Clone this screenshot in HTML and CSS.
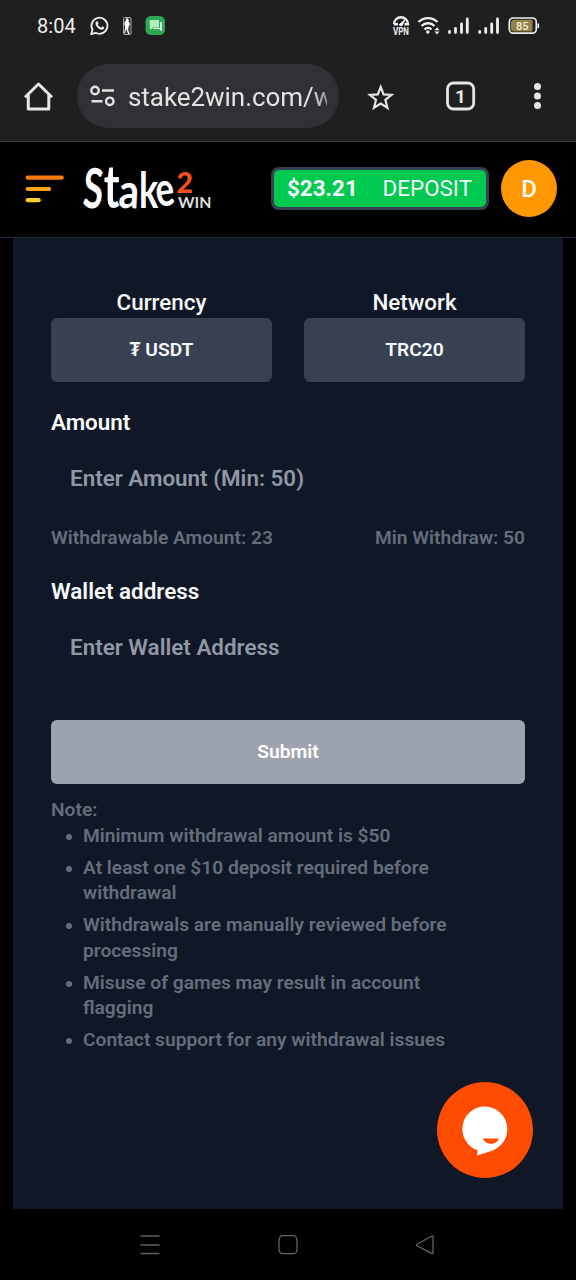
FILE: index.html
```html
<!DOCTYPE html>
<html lang="en">
<head>
<meta charset="utf-8">
<title>Stake2Win – Withdraw</title>
<link rel="stylesheet" href="styles.css">
</head>
<body>
<div class="status">
  <span class="clock">8:04</span>
  <svg class="status-left" width="80" height="24" viewBox="88 14 80 24">
    <path d="M91.2 34.2l1.3-4.5a8 8 0 1 1 3.2 3.1z" fill="none" stroke="#eee" stroke-width="1.8" stroke-linejoin="round"/>
    <path d="M96 21.8c1.2-1.3 2-.3 2.5 1.2.2.7-.7 1.2-.7 1.6.5 1.3 1.8 2.400 3.100 2.900.6 0 1.100-1.300 1.800-1 1.600.700 2 1.100 1.200 2.300-1.500 2-4.600.6-6.200-1-1.700-1.700-3-4.300-1.700-6z" fill="#eee"/>
    <rect x="123.500" y="17.500" width="7.500" height="17" rx="1" fill="#333" stroke="#aaa" stroke-width="1"/>
    <path d="M126.500 18l2 1 .2 3 1.300 2-1.500 3-.3 3 1.500 4h-1.500l-2-5-1.200 4.500-.8-.5 1-6-1-4 1.500-2.500z" fill="#fff"/>
    <rect x="145.500" y="16" width="19.500" height="19" rx="5.500" fill="#2fa855"/>
    <path d="M149.500 20h9.500v7.500h-6l-3 2.500z" fill="#b5ecbe"/>
    <path d="M160 22h1.800v9.500l-2.500-2.500h-6v-1h6.700z" fill="#e5ffe8"/>
  </svg>
  <svg class="status-right" width="152" height="24" viewBox="390 14 152 24">
    <path d="M394 24.200a6.900 6.900 0 0 1 14 0h-3.500M394 24.200h4" fill="none" stroke="#eee" stroke-width="2.400"/>
    <path d="M399 24.800l6.200-5.300-3.400 6.400z" fill="#eee" stroke="#eee" stroke-width="1"/>
    <text x="393" y="34.500" class="vpn" textLength="16" lengthAdjust="spacingAndGlyphs">VPN</text>
    <g fill="none" stroke="#eee" stroke-width="2.400">
      <path d="M418.500 22a13.500 13.500 0 0 1 19 0M421.500 26a9.200 9.200 0 0 1 13 0M424.500 29.500a5 5 0 0 1 7 0"/>
    </g>
    <circle cx="427.800" cy="32" r="1.800" fill="#eee"/>
    <path d="M434.500 30.200l2.500-3 2.500 3zM434.500 31.500l2.500 3 2.500-3z" fill="#eee"/>
    <g stroke="#eee" stroke-width="2.800" stroke-linecap="round">
      <path d="M449.500 31.500v1M455.500 28.500v4M461.500 24v8.500M467.300 19v13.500M479.700 31.500v1M485.700 28.500v4M491.700 24v8.500M497.500 19v13.500"/>
    </g>
    <rect x="509.300" y="18" width="27" height="15.200" rx="4" fill="#1f1f1f" stroke="#eee" stroke-width="1.700"/>
    <path d="M514 19.700h18.500v11.800H514a3 3 0 0 1-3-3v-5.800a3 3 0 0 1 3-3z" fill="#93824b"/>
    <path d="M538.300 23.500v4.500" stroke="#eee" stroke-width="1.600"/>
    <text x="516" y="29.700" class="battery" textLength="12.500" lengthAdjust="spacingAndGlyphs">85</text>
  </svg>
</div>

<div class="browser">
  <svg class="home" width="32" height="32" viewBox="22 80 32 32">
    <path d="M25 97.200L38.500 84 52 97.200M28.300 95v14h20.500V95" fill="none" stroke="#e6e6e6" stroke-width="3" stroke-linejoin="round"/>
  </svg>
  <div class="omnibox">
    <svg width="28" height="24" viewBox="88 84 28 24">
      <g fill="none" stroke="#e3e3e3" stroke-width="2.400"><circle cx="95" cy="90.500" r="3.700"/><circle cx="109.800" cy="101.300" r="3.700"/><path d="M102 90.500h12M91.500 101.300h11"/></g>
    </svg>
    <span class="url">stake2win.com/w</span>
  </div>
  <svg class="actions" width="180" height="40" viewBox="364 76 180 40">
    <path d="M380.700 87l2.900 7.400 7.900.5-6.100 5.100 2 7.800-6.700-4.300-6.700 4.300 2-7.800-6.100-5.100 7.900-.5z" fill="none" stroke="#e6e6e6" stroke-width="2.200"/>
    <rect x="447.500" y="83" width="26.200" height="26" rx="6" fill="none" stroke="#e6e6e6" stroke-width="2.800"/>
    <text x="460.500" y="103" text-anchor="middle" class="tabs">1</text>
    <g fill="#e6e6e6"><circle cx="537.500" cy="86.500" r="3.500"/><circle cx="537.500" cy="96" r="3.500"/><circle cx="537.500" cy="105.600" r="3.500"/></g>
  </svg>
</div>

<header class="site">
  <svg class="burger" width="40" height="30" viewBox="25 174 40 30">
    <g stroke-width="4.200" stroke-linecap="round"><path d="M27.700 177.700h34" stroke="#fb7a0b"/><path d="M27.700 189h21.300" stroke="#fba31a"/><path d="M27.700 200.200h11" stroke="#fbcf2a"/></g>
  </svg>
  <svg class="logo" width="134" height="50" viewBox="81 162 134 50">
    <g class="logo-main">
      <text transform="translate(82 206.500) rotate(4) scale(.69 1.050)">S</text>
      <text transform="translate(103.800 206.500) scale(.8 1.120)">t</text>
      <text transform="translate(118 206.500) rotate(3) scale(.76 .91)">a</text>
      <text transform="translate(139 206.500) scale(.68 .95)">k</text>
      <text transform="translate(157.500 206) rotate(-8) scale(.66 .9)">e</text>
    </g>
    <text class="logo-two" transform="translate(176.500 191.500) scale(.98 1)">2</text>
    <text class="logo-win" x="178" y="206.700" textLength="33.500" lengthAdjust="spacingAndGlyphs">WIN</text>
  </svg>
  <div class="deposit"><b>$23.21</b><span>DEPOSIT</span></div>
  <div class="avatar">D</div>
</header>

<main class="card">
  <div class="pair">
    <div class="choice"><label>Currency</label><div class="pill">₮ USDT</div></div>
    <div class="choice"><label>Network</label><div class="pill">TRC20</div></div>
  </div>
  <div class="label amount">Amount</div>
  <div class="field">Enter Amount (Min: 50)</div>
  <div class="limits"><span>Withdrawable Amount: 23</span><span>Min Withdraw: 50</span></div>
  <div class="label wallet">Wallet address</div>
  <div class="field">Enter Wallet Address</div>
  <button class="submit">Submit</button>
  <div class="note">
    <div>Note:</div>
    <ul>
      <li>Minimum withdrawal amount is $50</li>
      <li>At least one $10 deposit required before<br>withdrawal</li>
      <li>Withdrawals are manually reviewed before<br>processing</li>
      <li>Misuse of games may result in account<br>flagging</li>
      <li>Contact support for any withdrawal issues</li>
    </ul>
  </div>
  <div class="chat">
    <svg width="96" height="96" viewBox="0 0 96 96">
      <path d="M48 24.500a22.500 22.500 0 0 1 22.300 22.500c0 10-6 18-14.500 21.500L40 73.500l.6-5.200A22.500 22.500 0 0 1 48 24.500z" fill="#fff"/>
      <path d="M45.500 56.500H62c-1.500 3.500-4.500 5.300-8 5.300s-6.500-2-8.500-5.300z" fill="#ff4c00"/>
    </svg>
  </div>
</main>

<nav class="system">
  <svg width="20" height="22" viewBox="0 0 20 22"><path d="M.5 2h19M.5 11h19M.5 19.500h19" stroke="#626262" stroke-width="1.500"/></svg>
  <svg width="20" height="22" viewBox="0 0 20 22"><rect x="1" y="1.700" width="18" height="18" rx="4" fill="none" stroke="#666" stroke-width="1.300"/></svg>
  <svg width="20" height="22" viewBox="0 0 20 22"><path d="M18 2.500v16.500q0 1-1 .6L2 11.800q-1.300-.8 0-1.600L17 2q1-.4 1 .5z" fill="none" stroke="#666" stroke-width="1.300"/></svg>
</nav>
</body>
</html>
```
FILE: styles.css
```css
* { box-sizing: border-box; }
body { margin: 0; width: 576px; height: 1280px; overflow: hidden; background: #000; color: #f8fafc; font-family: Roboto, "Noto Sans", sans-serif; display: flex; flex-direction: column; }
svg { display: block; flex: none; overflow: visible; }

.status { height: 50px; background: #1f1f1f; display: flex; align-items: center; padding: 2px 34px 0 37px; }
.clock { width: 51px; font-size: 20px; color: #eee; letter-spacing: .1px; }
.status-right { margin-left: auto; }
.vpn { font: 700 10.5px Roboto, sans-serif; fill: #eee; }
.battery { font: 500 11px Roboto, sans-serif; fill: #f5eed5; }

.browser { height: 92px; background: #1f1f1f; border-bottom: 1px solid #3b3b3b; display: flex; align-items: center; padding: 1px 0 0 22px; }
.omnibox { width: 262px; height: 64px; margin-left: 23px; border-radius: 32px; background: #303134; display: flex; align-items: center; gap: 12px; padding: 0 12px 0 11px; }
.url { flex: 1; overflow: hidden; white-space: nowrap; font-size: 26px; line-height: 36px; letter-spacing: -.05px; color: #e3e3e3; padding-top: 1px; -webkit-mask-image: linear-gradient(90deg, #000 92%, #0008); mask-image: linear-gradient(90deg, #000 92%, #0008); }
.actions { margin-left: 25px; }
.tabs { font: 700 19px Roboto, sans-serif; fill: #e6e6e6; }

.site { height: 96px; border-bottom: 1px solid #1f2937; display: flex; align-items: center; padding: 0 19px 2px 25px; }
.burger { margin-top: 1px; }
.logo { margin: -2px 0 0 16px; }
.logo-main { font: 700 53px Lato, sans-serif; fill: #fff; }
.logo-two { font: 900 29px Lato, sans-serif; fill: #f4501c; }
.logo-win { font: 700 14.5px Lato, sans-serif; fill: #ddd; }
.deposit { width: 218px; height: 43px; margin-left: 56px; border: 3px solid #374151; border-radius: 8px; background: #00c950; display: flex; align-items: center; justify-content: space-between; padding: 0 14px 1px 13px; font-size: 22.4px; }
.avatar { width: 56px; height: 57px; margin-left: auto; border-radius: 50%; background: #ff9800; display: grid; place-items: center; font-size: 24px; font-weight: 500; }

.card { position: relative; height: 971px; margin: 0 13px; padding: 48.400px 38px 0; background: #101726; }
.pair { display: grid; grid-template-columns: 1fr 1fr; gap: 32px; text-align: center; }
.choice label { display: block; font-size: 22.4px; line-height: 32px; font-weight: 500; }
.pill { height: 64px; border-radius: 6px; background: #374151; font-size: 19.2px; line-height: 64px; font-weight: 600; }
.label { font-size: 22.4px; line-height: 32px; font-weight: 600; }
.amount { margin-top: 24px; }
.field { height: 64px; margin-top: 8px; padding: 0 19px; font-size: 22.4px; line-height: 64px; font-weight: 600; color: #9098a6; }
.limits { display: flex; justify-content: space-between; margin-top: 15px; font-size: 19.2px; line-height: 26px; font-weight: 600; color: #656d7c; }
.wallet { margin-top: 24px; }
.submit { display: block; width: 100%; height: 64px; margin-top: 41px; padding: 0 0 1px; border: 0; border-radius: 6px; background: #9ca3af; color: #fff; font: 600 19.2px Roboto, sans-serif; }
.note { margin-top: 12.600px; font-size: 19.2px; line-height: 25.6px; font-weight: 600; color: #656d7c; }
.note ul { margin: 0; padding-left: 32px; list-style: none; }
.note li::before { content: ""; float: left; width: 6px; height: 6px; margin: 11px 0 0 -17px; border-radius: 50%; background: #656d7c; }
.note li + li { margin-top: 6.4px; }
.chat { position: absolute; right: 30px; bottom: 31.500px; width: 96px; height: 96px; border-radius: 50%; background: #ff4c00; }

.system { height: 71px; display: flex; justify-content: space-between; align-items: center; padding: 0 141px 0 140px; }
```
